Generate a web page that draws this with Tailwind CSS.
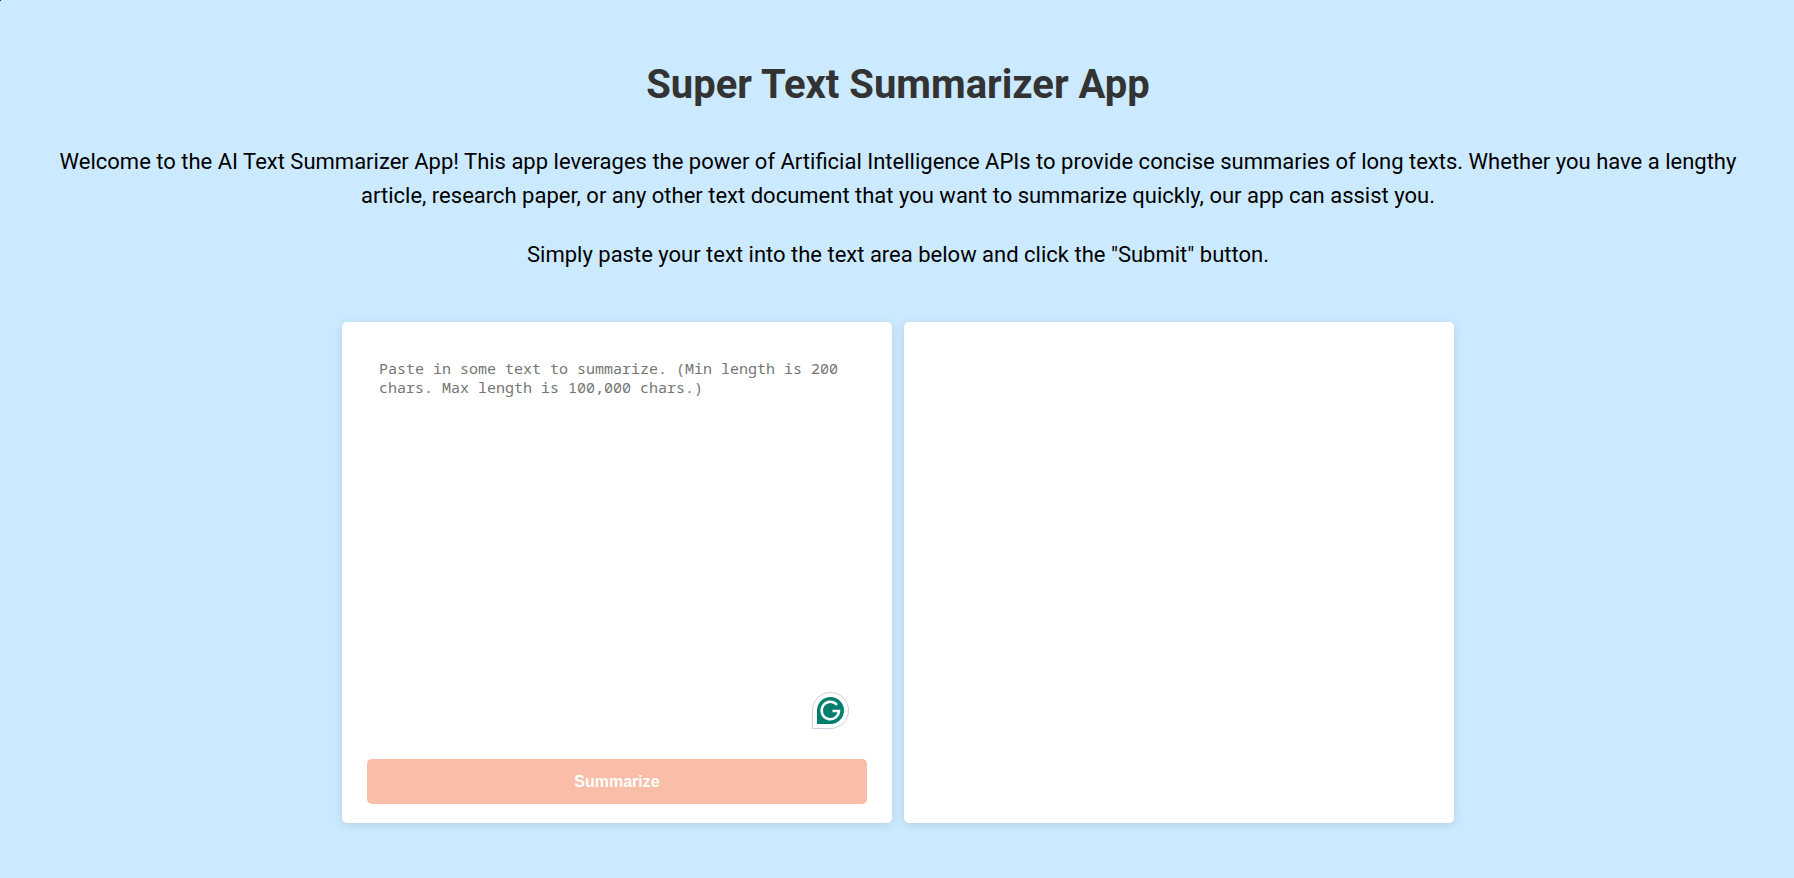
<!DOCTYPE html>
<html lang="en">
<head>
<meta charset="utf-8">
<title>Super Text Summarizer App</title>
<script src="https://cdn.jsdelivr.net/npm/@tailwindcss/browser@4"></script>
</head>
<body class="relative min-h-screen bg-[#cceaff] pr-10 pl-[42px] pt-[57px] pb-[55px] text-center font-['Roboto',sans-serif] text-black">
<span class="absolute top-0 left-0 size-px bg-[#333]"></span>
<h1 class="text-[40px] leading-14 font-bold text-[#333]">Super Text Summarizer App</h1>
<div class="mt-8 space-y-[25px] text-[22px] leading-[34px]">
<p>Welcome to the AI Text Summarizer App! This app leverages the power of Artificial Intelligence APIs to provide concise summaries of long texts. Whether you have a lengthy article, research paper, or any other text document that you want to summarize quickly, our app can assist you.</p>
<p>Simply paste your text into the text area below and click the "Submit" button.</p>
</div>
<main class="mx-auto mt-[50px] grid max-w-[1112px] grid-cols-2 gap-3">
<form class="relative flex min-h-[501px] flex-col rounded-[5px] bg-white px-[25px] pt-[25px] pb-[19px] shadow-[0_2px_10px_rgba(0,0,0,0.12)]">
<textarea aria-label="Text to summarize" class="w-full flex-1 resize-none p-3 font-['Noto_Sans_Mono','DejaVu_Sans_Mono',monospace] text-[15px] leading-[19px] outline-none placeholder:text-[#757575]" placeholder="Paste in some text to summarize. (Min length is 200 chars. Max length is 100,000 chars.)"></textarea>
<svg class="absolute right-[43px] bottom-[94px] size-[37px]" viewBox="0 0 37 37" fill="none" aria-hidden="true">
<path d="M.5 36.5v-18a18 18 0 1 1 18 18z" fill="#fff" stroke="#cfcfdf"/>
<path d="M5 32V18.500a13.500 13.500 0 1 1 13.500 13.500z" fill="#027e6f"/>
<path d="M25 13a8.700 8.700 0 1 0 2 6h-6.500" stroke="#fff" stroke-width="2.500"/>
</svg>
<button type="button" class="mt-4 h-[45px] rounded-[5px] bg-[#fabda8] font-['Liberation_Sans',sans-serif] text-base font-bold text-white">Summarize</button>
</form>
<section aria-label="Summary" class="rounded-[5px] bg-white shadow-[0_2px_10px_rgba(0,0,0,0.12)]"></section>
</main>
</body>
</html>
